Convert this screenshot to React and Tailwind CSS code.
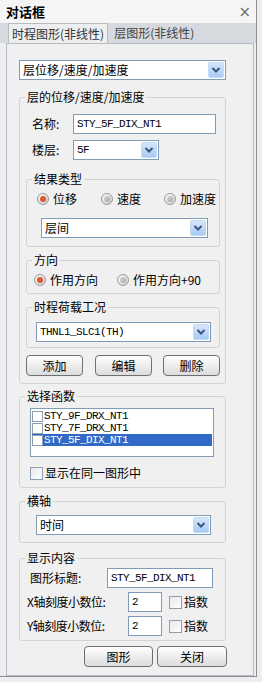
import React from 'react';

const cjk = "font-['Noto_Sans_CJK_SC',sans-serif]";
const mono = "font-['Liberation_Mono',monospace] text-[11px] tracking-[-0.6px]";

function Chevron() {
    return (
        <svg width="10" height="8" viewBox="0 0 10 8">
            <path d="M1.5 2 L5 5.5 L8.5 2" fill="none" stroke="#3b5580" strokeWidth="2" />
        </svg>
    );
}

function Dropdown({ text, width, mono: isMono, className = '' }) {
    return (
        <div
            className={`flex items-center h-[20px] bg-white border border-[#7f9db9] ${className}`}
            style={{ width }}
        >
            <span className={`flex-1 pl-[3px] whitespace-nowrap ${isMono ? mono : `${cjk} text-[12px] leading-[14px]`}`}>{text}</span>
            <span className="flex items-center justify-center w-[16px] h-[16px] mr-[1px] rounded-[2px] bg-gradient-to-b from-[#d4e6fb] to-[#a9cbf2] border border-[#c4daf5]">
                <Chevron />
            </span>
        </div>
    );
}

function TextBox({ text, width, className = '' }) {
    return (
        <div
            className={`flex items-center h-[20px] bg-white border border-[#7f9db9] pl-[3px] ${mono} ${className}`}
            style={{ width }}
        >
            {text}
        </div>
    );
}

function Radio({ checked, label, className = '' }) {
    return (
        <div className={`flex items-center ${className}`}>
            <span className="flex items-center justify-center w-[12px] h-[12px] rounded-full border border-[#9a9a9a] bg-gradient-to-br from-[#ffffff] to-[#c8c8c8]">
                <span className={`w-[6px] h-[6px] rounded-full ${checked ? 'bg-[#e2582d]' : 'bg-gradient-to-br from-[#d8d8d8] to-[#a8a8a8]'}`} />
            </span>
            <span className={`ml-[4px] ${cjk} text-[12px] leading-[14px]`}>{label}</span>
        </div>
    );
}

function Check({ label, className = '' }) {
    return (
        <div className={`flex items-center ${className}`}>
            <span className="w-[13px] h-[13px] border border-[#8f9eb0] bg-gradient-to-br from-[#e4e8ee] to-white" />
            <span className={`ml-[2px] ${cjk} text-[12px] leading-[14px]`}>{label}</span>
        </div>
    );
}

function Button({ label, width, className = '' }) {
    return (
        <div
            className={`flex items-center justify-center h-[21px] rounded-[4px] border border-[#707070] bg-gradient-to-b from-white to-[#dcdcdc] ${cjk} text-[12px] leading-[14px] ${className}`}
            style={{ width }}
        >
            {label}
        </div>
    );
}

function Group({ title, className = '', children }) {
    return (
        <fieldset className={`border border-[#d0d5da] rounded-[3px] ${className}`}>
            <legend className={`ml-[5px] px-[2px] ${cjk} text-[12px] leading-[14px]`}>{title}</legend>
            {children}
        </fieldset>
    );
}

export default function App() {
    return (
        <div className="w-[262px] h-[682px] bg-[#eceef1] text-black overflow-hidden">
            <div className="flex flex-col w-[257px] h-[677px] border-r border-b border-[#8e8e8e]">
                {/* Title bar */}
                <div className="flex items-center justify-between h-[23px] bg-[#f5f5f5] pl-[6px] pr-[5px]">
                    <span className={`${cjk} text-[13px] font-bold leading-[14px]`}>对话框</span>
                    <span className="text-[15px] leading-[14px] text-[#707070] font-['DejaVu_Sans',sans-serif]">×</span>
                </div>

                {/* Tabs */}
                <div className="flex items-end h-[20px] bg-[#d6d9dd] pl-[8px]">
                    <div className={`h-[20px] px-[3px] bg-[#edeef0] border-l border-r border-t border-[#b7bcc2] ${cjk} text-[12px] leading-[19px] text-[#333]`}>
                        时程图形(非线性)
                    </div>
                    <div className={`h-[20px] pl-[6px] ${cjk} text-[12px] leading-[19px] text-[#444]`}>
                        层图形(非线性)
                    </div>
                </div>

                {/* Panel */}
                <div className="flex-1 ml-[6px] w-[248px] border border-[#b7bcc2] bg-[#f0f0f0] pl-[12px]">
                    <Dropdown text="层位移/速度/加速度" width={207} className="mt-[16px]" />

                    <Group title="层的位移/速度/加速度" className="mt-[10px] w-[207px] pb-[7px]">
                        <div className="flex items-center mt-[10px] pl-[12px]">
                            <span className={`w-[41px] ${cjk} text-[12px] leading-[14px]`}>名称:</span>
                            <TextBox text="STY_5F_DIX_NT1" width={143} />
                        </div>
                        <div className="flex items-center mt-[6px] pl-[12px]">
                            <span className={`w-[41px] ${cjk} text-[12px] leading-[14px]`}>楼层:</span>
                            <Dropdown text="5F" width={86} mono />
                        </div>

                        <Group title="结果类型" className="mt-[12px] ml-[6px] w-[194px] pb-[8px]">
                            <div className="flex items-center mt-[6px] pl-[10px] h-[14px]">
                                <Radio checked label="位移" />
                                <Radio label="速度" className="ml-[24px]" />
                                <Radio label="加速度" className="ml-[23px]" />
                            </div>
                            <Dropdown text="层间" width={167} className="mt-[12px] ml-[14px]" />
                        </Group>

                        <Group title="方向" className="mt-[6px] ml-[6px] w-[194px] pb-[6px]">
                            <div className="flex items-center mt-[6px] pl-[7px] h-[14px]">
                                <Radio checked label="作用方向" />
                                <Radio label="作用方向+90" className="ml-[19px]" />
                            </div>
                        </Group>

                        <Group title="时程荷载工况" className="mt-[6px] ml-[6px] w-[194px] pb-[5px]">
                            <Dropdown text="THNL1_SLC1(TH)" width={175} mono className="mt-[8px] ml-[9px]" />
                        </Group>

                        <div className="flex mt-[7px] ml-[6px]">
                            <Button label="添加" width={57} />
                            <Button label="编辑" width={57} className="ml-[12px]" />
                            <Button label="删除" width={57} className="ml-[11px]" />
                        </div>
                    </Group>

                    <Group title="选择函数" className="mt-[5px] w-[207px] pb-[7px]">
                        <div className="mt-[5px] ml-[10px] w-[184px] h-[49px] bg-white border border-[#7f9db9] pt-[1px] pl-[1px]">
                            {[
                                ['STY_9F_DRX_NT1', false],
                                ['STY_7F_DRX_NT1', false],
                                ['STY_5F_DIX_NT1', true],
                            ].map(([name, sel]) => (
                                <div
                                    key={name}
                                    className={`flex items-center h-[12px] w-[180px] ${sel ? 'bg-[#3169c6] text-white' : ''}`}
                                >
                                    <span className="w-[11px] h-[11px] border border-[#8f9eb0] bg-white" />
                                    <span className={`ml-[1px] ${mono} leading-[12px]`}>{name}</span>
                                </div>
                            ))}
                        </div>
                        <Check label="显示在同一图形中" className="mt-[9px] ml-[10px]" />
                    </Group>

                    <Group title="横轴" className="mt-[6px] w-[207px] pb-[7px]">
                        <Dropdown text="时间" width={175} className="mt-[7px] ml-[16px]" />
                    </Group>

                    <Group title="显示内容" className="mt-[8px] w-[207px] pb-[4px]">
                        <div className="flex items-center mt-[3px] pl-[10px]">
                            <span className={`w-[77px] ${cjk} text-[12px] leading-[14px]`}>图形标题:</span>
                            <TextBox text="STY_5F_DIX_NT1" width={106} />
                        </div>
                        <div className="flex items-center mt-[4px] pl-[7px]">
                            <span className={`w-[101px] ${cjk} text-[12px] leading-[14px] tracking-[-0.5px]`}>X轴刻度小数位:</span>
                            <TextBox text="2" width={34} />
                            <Check label="指数" className="ml-[7px]" />
                        </div>
                        <div className="flex items-center mt-[4px] pl-[7px]">
                            <span className={`w-[101px] ${cjk} text-[12px] leading-[14px] tracking-[-0.5px]`}>Y轴刻度小数位:</span>
                            <TextBox text="2" width={34} />
                            <Check label="指数" className="ml-[7px]" />
                        </div>
                    </Group>

                    <div className="flex mt-[5px] ml-[65px]">
                        <Button label="图形" width={69} />
                        <Button label="关闭" width={70} className="ml-[4px]" />
                    </div>
                </div>
            </div>
        </div>
    );
}
